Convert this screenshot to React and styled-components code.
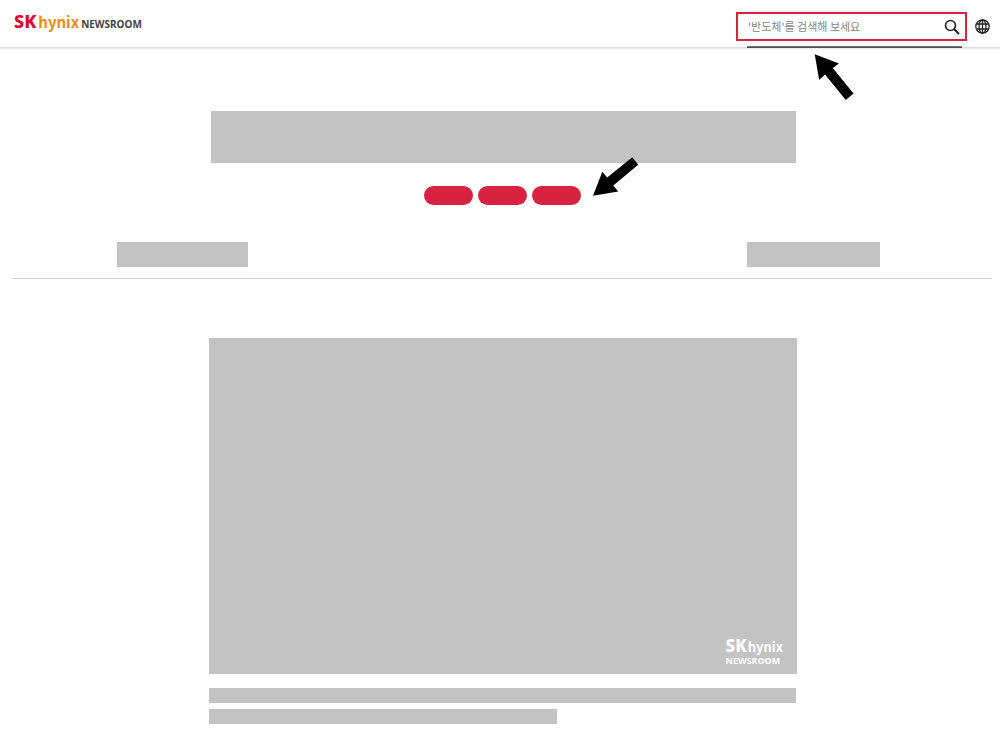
import React from "react";
import styled, { createGlobalStyle } from "styled-components";

const GlobalStyle = createGlobalStyle`
  *, *::before, *::after { box-sizing: border-box; }
  body {
    margin: 0;
    background: #fff;
    font-family: "Noto Sans CJK KR", "Noto Sans", sans-serif;
  }
`;

const Header = styled.header`
  display: flex;
  align-items: center;
  justify-content: space-between;
  height: 48px;
  padding: 0 10px 0 14px;
  border-bottom: 1px solid #dcdcdc;
  box-shadow: 0 1px 1px #eee;
`;

const Brand = styled.a`
  display: flex;
  align-items: baseline;
  height: 24px;
  margin-bottom: 6px;
  line-height: 24px;
  text-decoration: none;
`;

const BrandMark = styled.span`
  color: ${(p) => p.$color};
  font-family: "Noto Sans", "Open Sans", sans-serif;
  font-size: ${(p) => p.$size}px;
  font-weight: 800;
`;

const BrandName = styled.span`
  margin-left: ${(p) => p.$gap}px;
  color: ${(p) => p.$color};
  font-size: ${(p) => p.$size}px;
  font-weight: ${(p) => p.$weight};
`;

const BrandSite = styled.span`
  margin-left: ${(p) => p.$gap}px;
  color: ${(p) => p.$color};
  font-family: "Noto Sans", "Open Sans", sans-serif;
  font-size: ${(p) => p.$size}px;
  font-weight: 700;
`;

const Tools = styled.div`
  display: flex;
  align-items: center;
  gap: 8px;
  margin-top: 6px;
`;

const SearchForm = styled.form`
  position: relative;
  display: flex;
  align-items: center;
  width: 231px;
  height: 29px;
  padding: 0 5px 0 10px;
  border: 2px solid #d7233f;

  &::after {
    content: "";
    position: absolute;
    top: 32px;
    left: 9px;
    right: 3px;
    height: 2px;
    border-top: 1px solid #77777a;
    background: #4c4c4e;
  }
`;

const SearchInput = styled.input`
  flex: 1;
  min-width: 0;
  height: 24px;
  padding: 0 0 1px;
  border: 0;
  outline: 0;
  background: transparent;
  color: #333;
  font-family: inherit;
  font-size: 11px;

  &::placeholder { color: #858585; opacity: 1; }
`;

const IconButton = styled.button`
  display: flex;
  padding: 0;
  border: 0;
  background: none;
  cursor: pointer;
`;

const SearchPointer = styled.svg`
  position: absolute;
  top: 40px;
  left: 76px;
  z-index: 1;
`;

const Main = styled.main`
  padding: 63px 8px 10px 12px;
`;

const Column = styled.div`
  max-width: 590px;
  margin: 0 auto;
  padding-left: 2px;
`;

const TitleBlock = styled.div`
  height: 52px;
  margin: 0 1px 0 2px;
  background: #c3c3c3;
`;

const Tags = styled.nav`
  display: flex;
  justify-content: center;
  margin-top: 23px;
  padding-right: 1px;
`;

const TagList = styled.div`
  position: relative;
  display: flex;
  gap: 5px;
`;

const Tag = styled.button`
  width: 49px;
  height: 19px;
  padding: 0;
  border: 0;
  border-radius: 10px;
  background: #d7233f;
  cursor: pointer;
`;

const TagPointer = styled.svg`
  position: absolute;
  top: -30px;
  left: 168px;
`;

const Meta = styled.div`
  display: flex;
  justify-content: space-between;
  margin-top: 37px;
  padding: 0 112px 11px 105px;
  border-bottom: 1px solid #d2d2d2;
`;

const MetaBlock = styled.div`
  width: ${(p) => p.$width}px;
  height: 25px;
  background: #c3c3c3;
`;

const Picture = styled.div`
  display: flex;
  align-items: flex-end;
  justify-content: flex-end;
  height: 336px;
  margin-top: 59px;
  padding: 0 14px 7px 0;
  background: #c3c3c3;
`;

const Watermark = styled.div`
  display: flex;
  flex-direction: column;
`;

const WatermarkRow = styled.div`
  display: flex;
  align-items: baseline;
  height: ${(p) => p.$height}px;
  line-height: ${(p) => p.$height}px;
`;

const TextLine = styled.div`
  width: ${(p) => p.$width};
  height: 15px;
  margin-top: ${(p) => p.$gap}px;
  background: #c3c3c3;
`;

export default function App() {
  return (
    <>
      <GlobalStyle />
      <Header>
        <Brand href="#" aria-label="SK hynix NEWSROOM">
          <BrandMark $color="#e0062f" $size={18}>SK</BrandMark>
          <BrandName $color="#f08a10" $size={15} $weight={700} $gap={2}>hynix</BrandName>
          <BrandSite $color="#444" $size={10} $gap={2}>NEWSROOM</BrandSite>
        </Brand>
        <Tools>
          <SearchForm role="search" onSubmit={(e) => e.preventDefault()}>
            <SearchInput
              type="text"
              aria-label="검색"
              placeholder="'반도체'를 검색해 보세요"
            />
            <IconButton type="submit" aria-label="검색">
              <svg width="16" height="16" viewBox="0 0 16 16" fill="none" stroke="#222">
                <circle cx="6.500" cy="6.500" r="5" strokeWidth="1.600" />
                <path d="M10.200 10.200L15 15" strokeWidth="2" />
              </svg>
            </IconButton>
            <SearchPointer width="40" height="48" viewBox="0 0 40 48" aria-hidden="true">
              <path d="M0.700 0.300L25 9.500L18.800 14L39.500 39.500L31.800 46L11 20.500L5.200 26Z" fill="#000" />
            </SearchPointer>
          </SearchForm>
          <IconButton type="button" aria-label="언어">
            <svg width="15" height="16" viewBox="0 0 15 16" fill="none" stroke="#222" strokeWidth="1.300">
              <circle cx="7.500" cy="7.500" r="6.700" />
              <ellipse cx="7.500" cy="7.500" rx="3.500" ry="6.700" />
              <path d="M7.500 0.800V14.200M1.500 5H13.500M1.500 10H13.500" />
            </svg>
          </IconButton>
        </Tools>
      </Header>
      <Main>
        <Column>
          <TitleBlock />
          <Tags>
            <TagList>
              <Tag type="button" aria-label="태그 1" />
              <Tag type="button" aria-label="태그 2" />
              <Tag type="button" aria-label="태그 3" />
              <TagPointer width="48" height="42" viewBox="0 0 48 42" aria-hidden="true">
                <path d="M1 39.800L10.300 15.800L15.200 21.600L40.300 1.200L46.200 8.700L21.300 29.600L26.200 35.600Z" fill="#000" />
              </TagPointer>
            </TagList>
          </Tags>
        </Column>
        <Meta>
          <MetaBlock $width={131} />
          <MetaBlock $width={133} />
        </Meta>
        <Column>
          <Picture>
            <Watermark>
              <WatermarkRow $height={18}>
                <BrandMark $color="#fff" $size={17}>SK</BrandMark>
                <BrandName $color="#fff" $size={13} $weight={700} $gap={1}>hynix</BrandName>
              </WatermarkRow>
              <WatermarkRow $height={12}>
                <BrandSite $color="#fff" $size={9} $gap={0}>NEWSROOM</BrandSite>
              </WatermarkRow>
            </Watermark>
          </Picture>
          <TextLine $gap={14} $width="calc(100% - 1px)" />
          <TextLine $gap={6} $width="348px" />
        </Column>
      </Main>
    </>
  );
}
